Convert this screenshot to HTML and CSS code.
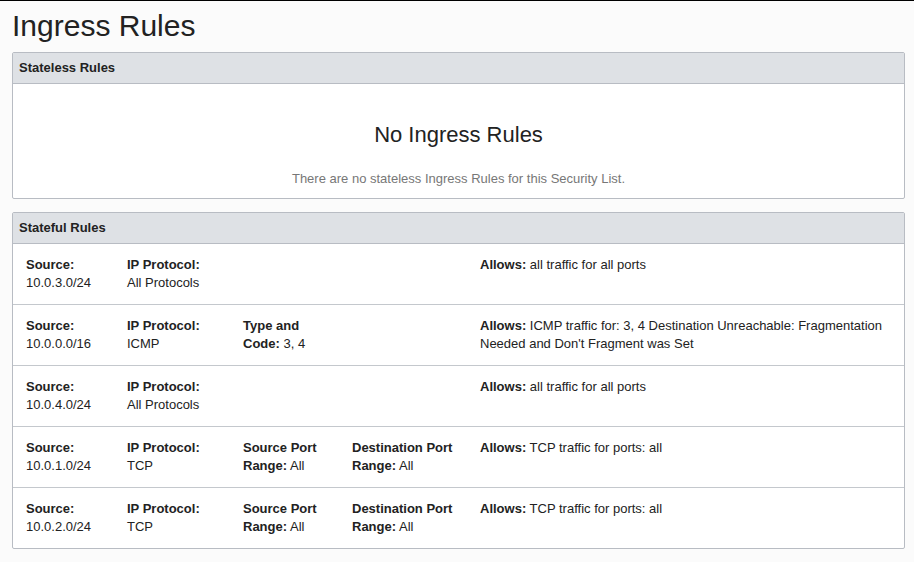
FILE: index.html
```html
<!DOCTYPE html>
<html>
<head>
<meta charset="utf-8">
<link rel="stylesheet" href="styles.css">
</head>
<body>
<h1 class="title">Ingress Rules</h1>
<section class="card">
  <div class="card-header">Stateless Rules</div>
  <div class="empty">
    <div class="empty-title">No Ingress Rules</div>
    <div class="empty-text">There are no stateless Ingress Rules for this Security List.</div>
  </div>
</section>
<section class="card card-2">
  <div class="card-header">Stateful Rules</div>
  <div class="rule">
    <div class="cell"><b>Source:</b><br>10.0.3.0/24</div>
    <div class="cell"><b>IP Protocol:</b><br>All Protocols</div>
    <div class="cell"></div>
    <div class="cell"></div>
    <div class="cell"><b>Allows:</b> all traffic for all ports</div>
  </div>
  <div class="rule">
    <div class="cell"><b>Source:</b><br>10.0.0.0/16</div>
    <div class="cell"><b>IP Protocol:</b><br>ICMP</div>
    <div class="cell"><b>Type and</b><br><b>Code:</b> 3, 4</div>
    <div class="cell"></div>
    <div class="cell"><b>Allows:</b> ICMP traffic for: 3, 4 Destination Unreachable: Fragmentation Needed and Don't Fragment was Set</div>
  </div>
  <div class="rule">
    <div class="cell"><b>Source:</b><br>10.0.4.0/24</div>
    <div class="cell"><b>IP Protocol:</b><br>All Protocols</div>
    <div class="cell"></div>
    <div class="cell"></div>
    <div class="cell"><b>Allows:</b> all traffic for all ports</div>
  </div>
  <div class="rule">
    <div class="cell"><b>Source:</b><br>10.0.1.0/24</div>
    <div class="cell"><b>IP Protocol:</b><br>TCP</div>
    <div class="cell"><b>Source Port</b><br><b>Range:</b> All</div>
    <div class="cell"><b>Destination Port</b><br><b>Range:</b> All</div>
    <div class="cell"><b>Allows:</b> TCP traffic for ports: all</div>
  </div>
  <div class="rule">
    <div class="cell"><b>Source:</b><br>10.0.2.0/24</div>
    <div class="cell"><b>IP Protocol:</b><br>TCP</div>
    <div class="cell"><b>Source Port</b><br><b>Range:</b> All</div>
    <div class="cell"><b>Destination Port</b><br><b>Range:</b> All</div>
    <div class="cell"><b>Allows:</b> TCP traffic for ports: all</div>
  </div>
</section>
</body>
</html>
```
FILE: styles.css
```css
html, body {
  margin: 0;
  background: #fbfbfb;
}
body {
  border-top: 1px solid #000;
  padding: 0 9px 0 12px;
  font-family: "Liberation Sans", Arial, sans-serif;
  font-size: 13px;
  color: #222;
}
.title {
  margin: 0;
  padding: 8px 0 9px 0;
  font-size: 30px;
  line-height: 34px;
  font-weight: normal;
  color: #222;
}
.card {
  border: 1px solid #b8bcc3;
  border-radius: 2px;
  background: #fff;
}
.card-2 {
  margin-top: 13px;
}
.card-header {
  background: #dee1e5;
  border-bottom: 1px solid #b8bcc3;
  padding: 7px 6px;
  font-weight: bold;
  line-height: 16px;
  color: #222;
}
.empty {
  text-align: center;
  padding: 38px 0 10px;
}
.empty-title {
  font-size: 22px;
  line-height: 26px;
  color: #222;
}
.empty-text {
  margin-top: 22px;
  color: #777;
  line-height: 18px;
}
.rule {
  display: grid;
  grid-template-columns: 101px 116px 109px 128px 1fr;
  padding: 12px 13px;
  line-height: 18px;
  border-bottom: 1px solid #c4c8cd;
}
.rule:last-child {
  border-bottom: none;
}
.cell {
  padding-right: 14px;
}
.cell:last-child {
  padding-right: 0;
}
.rule b {
  color: #222;
}
```
